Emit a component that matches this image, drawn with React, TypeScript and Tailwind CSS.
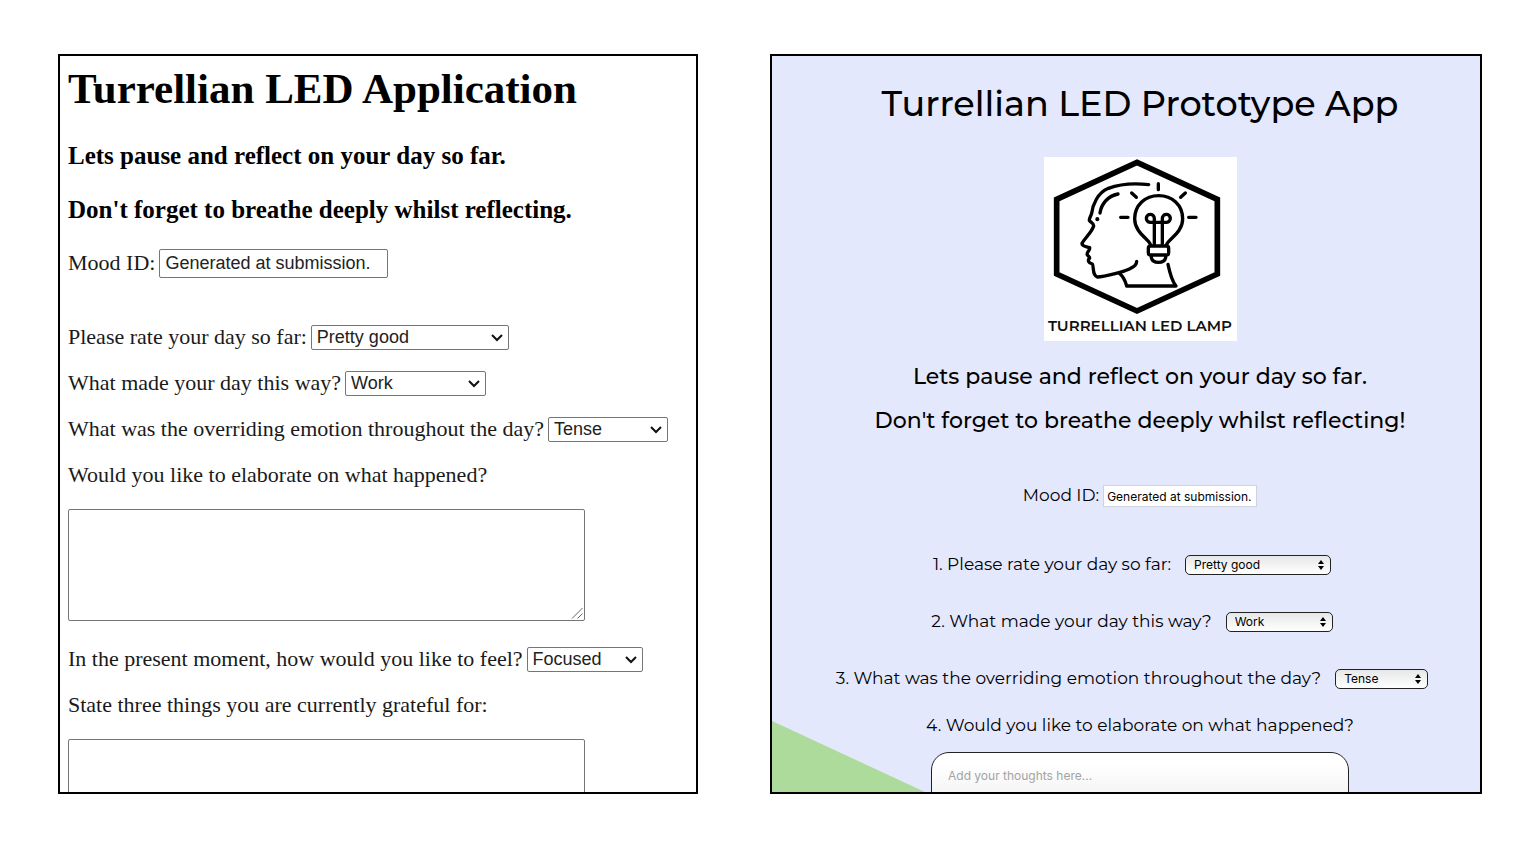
import { useId } from "react";
import type { ReactNode } from "react";

function PlainSelect({ id, width, options }: { id: string; width: string; options: string[] }) {
  return (
    <span className={`relative ml-1 inline-flex ${width}`}>
      <select
        id={id}
        className="h-[25px] w-full appearance-none rounded-[2px] border border-[#767676] bg-white pl-[5px] font-['Liberation_Sans',Arial,sans-serif] text-[18px] leading-[22px] text-[#222]"
      >
        {options.map((o) => (
          <option key={o}>{o}</option>
        ))}
      </select>
      <svg viewBox="0 0 12 8" className="pointer-events-none absolute top-[9px] right-[6px] h-2 w-3" fill="none" stroke="#111" strokeWidth="2">
        <path d="M1 1l5 5 5-5" />
      </svg>
    </span>
  );
}

function PlainRow({ label, width, options }: { label: string; width: string; options: string[] }) {
  const id = useId();
  return (
    <div className="flex h-[46px] items-center whitespace-nowrap">
      <label htmlFor={id}>{label}</label>
      <PlainSelect id={id} width={width} options={options} />
    </div>
  );
}

function PlainArea({ label }: { label: string }) {
  const id = useId();
  return (
    <div className="mb-[15px]">
      <label htmlFor={id} className="flex h-[46px] items-center whitespace-nowrap">
        {label}
      </label>
      <div className="relative mt-[11px] h-[112px] w-[517px]">
        <textarea id={id} className="block h-full w-full resize-none rounded-[2px] border border-[#767676] bg-white p-1" />
        <svg viewBox="0 0 12 12" className="pointer-events-none absolute right-[2px] bottom-[2px] h-3 w-3" fill="none" stroke="#666" strokeWidth="1">
          <path d="M1 11.500L11.500 1M6.500 11.500L11.500 6.500" />
        </svg>
      </div>
    </div>
  );
}

function PlainForm() {
  const moodId = useId();
  return (
    <section className="min-w-0 overflow-hidden border-2 border-black bg-white px-2 font-['Liberation_Serif','Times_New_Roman',serif] text-[22px] leading-[26px] text-[#1a1a1a]">
      <h1 className="mt-2 text-[43px] leading-[50px] font-bold whitespace-nowrap text-black">Turrellian LED Application</h1>
      <h2 className="mt-7 text-[25px] leading-[28px] font-bold whitespace-nowrap text-black">Lets pause and reflect on your day so far.</h2>
      <h2 className="mt-[26px] text-[25px] leading-[28px] font-bold whitespace-nowrap text-black">Don't forget to breathe deeply whilst reflecting.</h2>
      <div className="mt-4 mb-7 flex h-[46px] items-center">
        <label htmlFor={moodId}>Mood ID:</label>
        <input
          id={moodId}
          readOnly
          value="Generated at submission."
          className="ml-1 h-[29px] w-[229px] rounded-[2px] border border-[#767676] bg-white px-[5px] font-['Liberation_Sans',Arial,sans-serif] text-[18px] text-[#222]"
        />
      </div>
      <PlainRow label="Please rate your day so far:" width="w-[198px]" options={["Pretty good"]} />
      <PlainRow label="What made your day this way?" width="w-[141px]" options={["Work"]} />
      <PlainRow label="What was the overriding emotion throughout the day?" width="w-[120px]" options={["Tense"]} />
      <PlainArea label="Would you like to elaborate on what happened?" />
      <PlainRow label="In the present moment, how would you like to feel?" width="w-[116px]" options={["Focused"]} />
      <PlainArea label="State three things you are currently grateful for:" />
    </section>
  );
}

function Logo() {
  return (
    <figure className="mx-auto flex h-[184px] w-[193px] flex-col bg-white">
      <svg viewBox="12 21 579 483" className="h-[161px] w-[193px]" fill="none" stroke="#000" strokeLinecap="round" strokeLinejoin="round">
        <path d="M291 37L532 148V372L291 483L50 372V148Z" strokeWidth="17" strokeLinejoin="miter" />
        <g strokeWidth="10">
          <path d="M326 104C290 100 240 102 205 115C172 129 158 165 155 190C152 200 147 205 148 211C150 216 162 219 161 228C156 246 135 264 126 280C125 290 137 289 149 293C151 302 138 307 142 315C146 320 149 320 149 324C142 331 145 339 157 342C163 352 155 374 172 381C195 381 250 365 270 356C283 351 290 342 290 334" />
          <path d="M238 370C250 380 256 393 260 408H408C395 392 389 367 384 343" />
          <path d="M180 189C184 161 204 138 234 132" />
          <path d="M172 207V208" strokeWidth="12" />
          <path d="M355 101V119M275 129L289 142M436 129L422 142M242 202H264M446 202H468" />
          <path d="M332 286C331 269 284 250 284 207C284 165 316 137 356 137C396 137 428 165 428 207C428 250 382 268 379 286" />
          <path d="M343 284V217M367 284V217M343 217H330A12 12 0 1 1 343 206V217H367V206A12 12 0 1 1 380 217H367" />
          <rect x="325" y="288" width="61" height="27" rx="7" />
          <path d="M334 317V323C338 342 373 342 377 323V317" />
        </g>
      </svg>
      <figcaption className="text-center text-[15px] leading-[16px] font-semibold whitespace-nowrap text-[#111]">TURRELLIAN LED LAMP</figcaption>
    </figure>
  );
}

function StyledRow({ label, width, value }: { label: string; width: string; value: string }) {
  const id = useId();
  return (
    <div className="flex h-[57px] items-center justify-center whitespace-nowrap">
      <label htmlFor={id}>{label}</label>
      <span className={`relative mr-4 ml-[14px] inline-flex ${width}`}>
        <select
          id={id}
          className="h-5 w-full appearance-none rounded-[5px] border border-[#222] bg-linear-to-b from-[#e6e7e8] to-white pl-2 font-[Inter,sans-serif] text-[12px] leading-[18px] text-black"
        >
          <option>{value}</option>
        </select>
        <svg viewBox="0 0 6 10" className="pointer-events-none absolute top-[5px] right-[7px] h-[10px] w-[6px]" fill="#000">
          <path d="M3 0L6 4H0ZM3 10L0 6H6Z" />
        </svg>
      </span>
    </div>
  );
}

function Line({ children }: { children: ReactNode }) {
  return <h2 className="h-11 text-[22px] leading-[44px] font-medium whitespace-nowrap">{children}</h2>;
}

function StyledForm() {
  const moodId = useId();
  const thoughtsId = useId();
  return (
    <section className="relative isolate min-w-0 overflow-hidden border-2 border-black bg-[#e4e8fc] pl-7 text-center font-['Montserrat',Inter,sans-serif] text-[17px] text-black">
      <div className="absolute bottom-0 left-0 -z-10 h-[71px] w-[153px] bg-[#addb9b] [clip-path:polygon(0_0,100%_100%,0_100%)]" />
      <h1 className="mt-6 mb-[29px] text-[35px] leading-[48px] font-medium whitespace-nowrap">Turrellian LED Prototype App</h1>
      <Logo />
      <div className="mt-[14px]">
        <Line>Lets pause and reflect on your day so far.</Line>
        <Line>Don't forget to breathe deeply whilst reflecting!</Line>
      </div>
      <div className="mt-[30px] mb-[17px] flex h-[46px] items-center justify-center">
        <label htmlFor={moodId}>Mood ID:</label>
        <input
          id={moodId}
          readOnly
          value="Generated at submission."
          className="ml-1 h-[22px] w-[154px] border border-[#d0d3dd] bg-white px-[3px] font-[Inter,sans-serif] text-[12px] text-black"
        />
      </div>
      <StyledRow label="1. Please rate your day so far:" width="w-[146px]" value="Pretty good" />
      <StyledRow label="2. What made your day this way?" width="w-[107px]" value="Work" />
      <StyledRow label="3. What was the overriding emotion throughout the day?" width="w-[93px]" value="Tense" />
      <label htmlFor={thoughtsId} className="flex h-[38px] items-center justify-center whitespace-nowrap">
        4. Would you like to elaborate on what happened?
      </label>
      <textarea
        id={thoughtsId}
        placeholder="Add your thoughts here..."
        className="mx-auto mt-[7px] block h-[112px] w-[418px] resize-none rounded-[18px] border border-[#222] bg-linear-to-b from-white from-10% to-[#dcdde0] px-4 py-[15px] font-[Inter,sans-serif] text-[12px] leading-4 placeholder:text-[#a3a3a3]"
      />
    </section>
  );
}

export default function App() {
  return (
    <main className="grid h-screen grid-cols-[640fr_712fr] grid-rows-[minmax(0,1fr)] gap-x-[72px] bg-white py-[54px] pr-[50px] pl-[58px]">
      <PlainForm />
      <StyledForm />
    </main>
  );
}
